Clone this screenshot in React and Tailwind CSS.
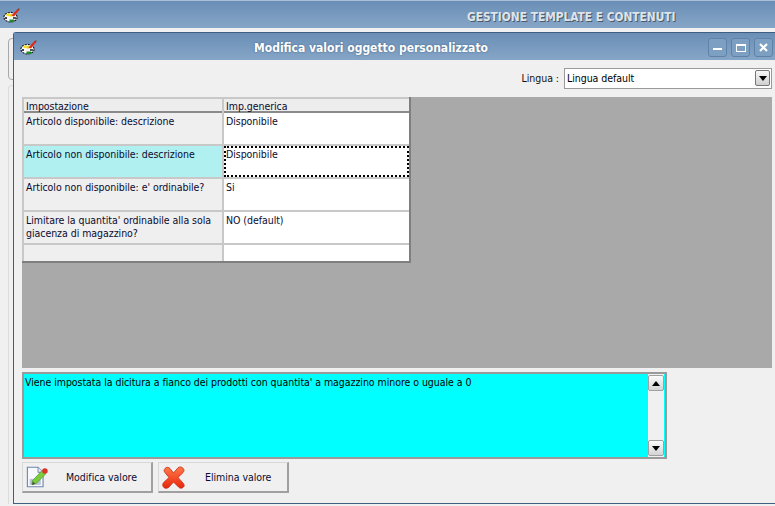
function PaletteIcon() {
  return (
    <svg width="17" height="15" viewBox="0 0 17 15" className="mt-[2px] shrink-0">
      <ellipse cx="7.5" cy="9.2" rx="6.6" ry="4.8" fill="#f8f8f8" stroke="#111" strokeWidth="1.1" strokeDasharray="2 1" />
      <rect x="3.5" y="5.5" width="3" height="2.5" fill="#f2e21c" />
      <rect x="6.5" y="6" width="3" height="2.5" fill="#e9d21a" />
      <rect x="6.5" y="11.5" width="4.5" height="2.5" fill="#1f8a2a" />
      <rect x="2" y="9" width="2" height="2" fill="#444" />
      <rect x="10" y="9" width="3" height="2" fill="#555" />
      <path d="M8.5 7.5 L14.5 1 L16 2.2 L11 8.5 Z" fill="#e02a18" />
      <path d="M14.5 1 L16.5 0.3 L16 2.8 Z" fill="#8a2a10" />
    </svg>
  );
}

function EditIcon() {
  return (
    <svg width="24" height="24" viewBox="0 0 26 24" className="shrink-0">
      <path d="M1.5 1.5 H13 L18.5 7 V22.5 H1.5 Z" fill="#f6f8fc" stroke="#6d84ad" strokeWidth="1.2" />
      <path d="M13 1.5 V7 H18.5" fill="#dfe6f2" stroke="#6d84ad" strokeWidth="1" />
      <rect x="4" y="14" width="12" height="6.5" fill="#b8c2d8" />
      <path d="M7 16 L17.5 5 L21.5 8.5 L11 19 L6.5 20.5 Z" fill="#7ccb3c" stroke="#4f9a25" strokeWidth="0.8" />
      <circle cx="20.5" cy="5.5" r="3" fill="#d9342b" />
      <path d="M6.5 20.5 L7.5 17 L10 19.3 Z" fill="#4a4a4a" />
    </svg>
  );
}

function DeleteIcon() {
  return (
    <svg width="23" height="23" viewBox="0 0 23 23" className="shrink-0">
      <defs>
        <linearGradient id="redx" x1="0" y1="0" x2="0" y2="1">
          <stop offset="0" stopColor="#ff7a4a" />
          <stop offset="1" stopColor="#e8260c" />
        </linearGradient>
      </defs>
      <path
        d="M3 2.5 C4.5 .8 6.5 1 8 2.5 L11.5 7 L16 1.8 C17.5 .4 19.5 .8 21 2.2 C22.4 3.6 22.2 5.2 21 6.6 L16 11.5 L21.4 17.5 C22.6 19 22.4 20.5 21 21.5 C19.5 22.6 17.8 22.4 16.5 21 L11.5 16 L7 21 C5.6 22.4 3.4 22.8 1.8 21.4 C.4 20 .4 18 1.6 16.6 L7 11.5 L3 6.6 C1.8 5.2 1.8 3.8 3 2.5 Z"
        fill="url(#redx)"
        stroke="#c6280f"
        strokeWidth="0.8"
      />
    </svg>
  );
}

function WinButton({ children }) {
  return (
    <div className="grid h-[19px] w-[19px] place-items-center rounded-[3px] border border-[#5f83a8] bg-[#7d9fc2]">
      {children}
    </div>
  );
}

function ScrollButton({ up }) {
  return (
    <div className="grid h-[16px] w-[16px] place-items-center rounded-[2px] border border-[#a0a0a0] bg-gradient-to-b from-[#fbfbfb] to-[#d4d4d4]">
      <svg width="8" height="5" viewBox="0 0 8 5">
        <path d={up ? "M4 0 L8 5 H0 Z" : "M0 0 H8 L4 5 Z"} fill="#000" />
      </svg>
    </div>
  );
}

function ActionButton({ icon, label, labelClass }) {
  return (
    <button className="flex h-[31px] w-[131px] items-center border border-[#d8d8d8] border-r-2 border-b-2 border-r-[#a0a0a0] border-b-[#a0a0a0] bg-[#f0f0f0] pl-[3px] text-[#0b0b30]">
      {icon}
      <span className={labelClass}>{label}</span>
    </button>
  );
}

const rows = [
  { label: "Articolo disponibile: descrizione", value: "Disponibile", h: "h-[33px]" },
  { label: "Articolo non disponibile: descrizione", value: "Disponibile", h: "h-[33px]", selected: true },
  { label: "Articolo non disponibile: e' ordinabile?", value: "Si", h: "h-[33px]" },
  { label: "Limitare la quantita' ordinabile alla sola giacenza di magazzino?", value: "NO (default)", h: "h-[33px]" },
  { label: "", value: "", h: "h-[16px]" },
];

export default function App() {
  return (
    <div className="relative h-[506px] w-[775px] overflow-hidden bg-[#f0f0f0] font-['DejaVu_Sans_Condensed','Liberation_Sans',sans-serif] text-[10.5px] leading-[13px] tracking-[-0.05px] text-[#0b0b30]">
      {/* main window behind */}
      <div className="flex h-[28px] items-center border-t border-[#a9bfd6] bg-gradient-to-b from-[#6a8eb6] to-[#86a6c7] pl-[3px]">
        <PaletteIcon />
        <div className="ml-[447px] mt-[5px] text-[11.8px] font-bold tracking-normal text-[#dfe4ea] [text-shadow:1px_1px_0_#4c5a68]">
          GESTIONE TEMPLATE E CONTENUTI
        </div>
      </div>
      <div className="ml-[8px] mt-[10px] h-[42px] rounded-l-[4px] border border-[#a8a8a8]" />
      <div className="ml-[8px] mt-[5px] h-[419px] rounded-tl-[4px] border-l border-t border-[#dcdcdc]" />
      <div className="pl-[60px] font-bold text-black">Articolo disponibile</div>

      {/* child window */}
      <div className="absolute bottom-[2px] left-[13px] right-0 top-[32px] rounded-tl-[3px] border-b border-l border-t border-[#3f5f80] bg-[#f0f0f0]">
        <div className="relative flex h-[27px] items-center bg-gradient-to-b from-[#6a8eb6] to-[#86a6c7] pl-[6px]">
          <PaletteIcon />
          <div className="ml-[217px] mt-[4px] text-[12px] font-bold tracking-normal text-white [text-shadow:0_0_2px_#3f5f80]">
            Modifica valori oggetto personalizzato
          </div>
          <div className="ml-auto mr-[2px] flex gap-[4px] self-start pt-[5px]">
            <WinButton><div className="mt-[3px] h-[2px] w-[9px] bg-white" /></WinButton>
            <WinButton><div className="h-[8px] w-[10px] border border-t-2 border-white" /></WinButton>
            <WinButton>
              <svg width="9" height="9" viewBox="0 0 9 9">
                <path d="M1 1 L8 8 M8 1 L1 8" stroke="#fff" strokeWidth="2.2" />
              </svg>
            </WinButton>
          </div>
        </div>

        <div className="pl-[8px] pr-[3px]">
          <div className="flex h-[37px] items-center justify-end pb-[1px]">
            <span className="mr-[5px] text-[#111]">Lingua :</span>
            <div className="flex h-[21px] w-[208px] items-center justify-between border border-[#9a9a9a] bg-white pl-[2px] pr-[1px] text-[#000]">
              <span className="pt-[1px]">Lingua default</span>
              <div className="grid h-[16px] w-[15px] place-items-center rounded-[2px] border border-[#777] bg-gradient-to-b from-[#f8f8f8] to-[#cfcfcf]">
                <svg width="8" height="5" viewBox="0 0 8 5"><path d="M0 0 H8 L4 5 Z" fill="#000" /></svg>
              </div>
            </div>
          </div>

          {/* grid */}
          <div className="h-[271px] bg-[#a9a9a9]">
            <div className="w-[389px] border-b-2 border-r-2 border-[#7f7f7f] bg-white">
              <div className="grid h-[16px] grid-cols-[202px_1fr] border-b-2 border-t-2 border-b-[#8a8a8a] border-t-[#c8c8c8] bg-[#ededed]">
                <div className="border-l-2 border-r-2 border-[#c8c8c8] pl-[2px] leading-[14px]">Impostazione</div>
                <div className="pl-[2px] leading-[14px]">Imp.generica</div>
              </div>
              {rows.map((row, i) => (
                <div key={i} className={`grid grid-cols-[202px_1fr] ${row.h} ${i < 4 ? "border-b-2 border-[#c8c8c8]" : ""}`}>
                  <div className={`border-l-2 border-r-2 border-[#c8c8c8] pl-[2px] pt-[2px] ${row.selected ? "bg-[#b0f0f0]" : "bg-[#efefef]"}`}>
                    {row.label}
                  </div>
                  {row.selected ? (
                    <div className="border-2 border-dotted border-black">{row.value}</div>
                  ) : (
                    <div className="pl-[2px] pt-[2px]">{row.value}</div>
                  )}
                </div>
              ))}
            </div>
          </div>

          {/* description */}
          <div className="mt-[4px] flex h-[87px] w-[645px] border-2 border-[#9a9a9a] bg-[#00ffff]">
            <div className="flex-1 pl-[1px] pt-[2px] text-[#000]">
              Viene impostata la dicitura a fianco dei prodotti con quantita' a magazzino minore o uguale a 0
            </div>
            <div className="flex w-[17px] flex-col items-center justify-between border-r border-[#00ffff] bg-[#f0f0f0] py-[1px]">
              <ScrollButton up />
              <ScrollButton />
            </div>
          </div>

          <div className="mt-[3px] flex gap-[5px]">
            <ActionButton icon={<EditIcon />} label="Modifica valore" labelClass="ml-[16px] pt-[1px]" />
            <ActionButton icon={<DeleteIcon />} label="Elimina valore" labelClass="ml-[20px] pt-[1px]" />
          </div>
        </div>
      </div>
    </div>
  );
}
